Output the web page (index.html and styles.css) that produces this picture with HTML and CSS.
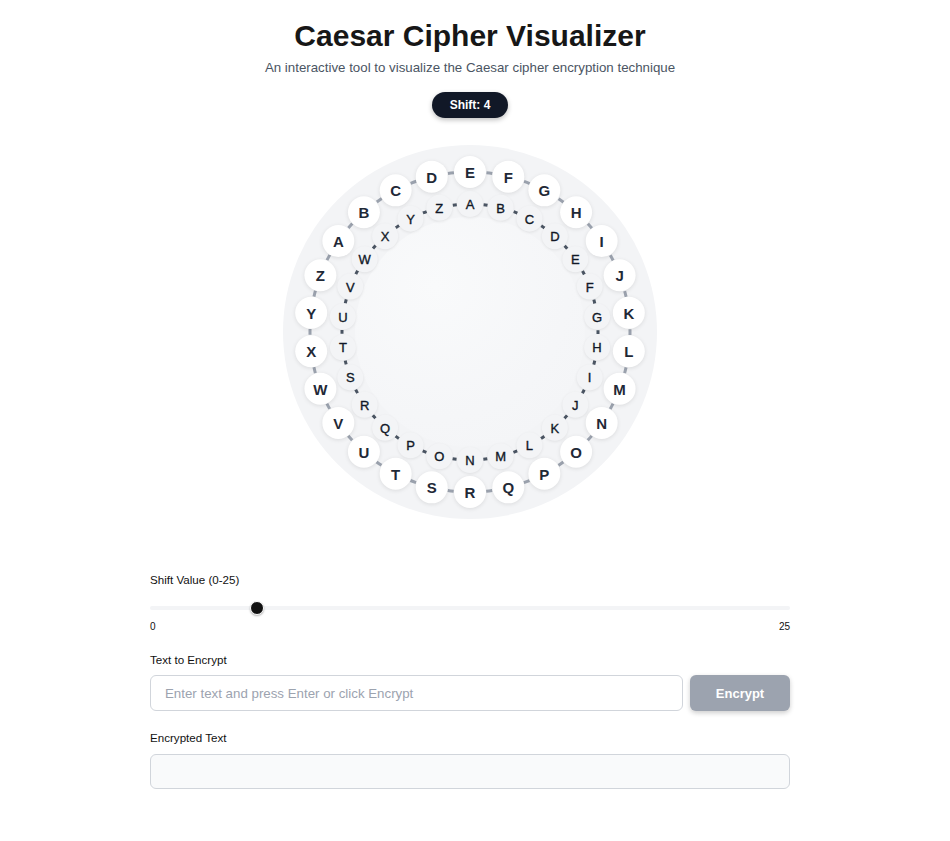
FILE: index.html
```html
<!DOCTYPE html>
<html lang="en">
<head>
<meta charset="utf-8">
<title>Caesar Cipher Visualizer</title>
<link rel="stylesheet" href="styles.css">
</head>
<body>
<div class="page">
  <main class="app">
    <header class="head">
      <h1 class="title">Caesar Cipher Visualizer</h1>
      <p class="subtitle">An interactive tool to visualize the Caesar cipher encryption technique</p>
      <div class="badge">Shift: 4</div>
    </header>

    <section class="wheel">
      <div class="core"></div>
      <svg class="rings" width="374" height="374" viewBox="0 0 374 374">
        <circle class="ring-outer" cx="187" cy="187" r="160"/>
        <circle class="ring-inner" cx="187" cy="187" r="128"/>
      </svg>
      <span class="l out" style="--i:-4">A</span>
      <span class="l out" style="--i:-3">B</span>
      <span class="l out" style="--i:-2">C</span>
      <span class="l out" style="--i:-1">D</span>
      <span class="l out" style="--i:0">E</span>
      <span class="l out" style="--i:1">F</span>
      <span class="l out" style="--i:2">G</span>
      <span class="l out" style="--i:3">H</span>
      <span class="l out" style="--i:4">I</span>
      <span class="l out" style="--i:5">J</span>
      <span class="l out" style="--i:6">K</span>
      <span class="l out" style="--i:7">L</span>
      <span class="l out" style="--i:8">M</span>
      <span class="l out" style="--i:9">N</span>
      <span class="l out" style="--i:10">O</span>
      <span class="l out" style="--i:11">P</span>
      <span class="l out" style="--i:12">Q</span>
      <span class="l out" style="--i:13">R</span>
      <span class="l out" style="--i:14">S</span>
      <span class="l out" style="--i:15">T</span>
      <span class="l out" style="--i:16">U</span>
      <span class="l out" style="--i:17">V</span>
      <span class="l out" style="--i:18">W</span>
      <span class="l out" style="--i:19">X</span>
      <span class="l out" style="--i:20">Y</span>
      <span class="l out" style="--i:21">Z</span>

      <span class="l in" style="--i:0">A</span>
      <span class="l in" style="--i:1">B</span>
      <span class="l in" style="--i:2">C</span>
      <span class="l in" style="--i:3">D</span>
      <span class="l in" style="--i:4">E</span>
      <span class="l in" style="--i:5">F</span>
      <span class="l in" style="--i:6">G</span>
      <span class="l in" style="--i:7">H</span>
      <span class="l in" style="--i:8">I</span>
      <span class="l in" style="--i:9">J</span>
      <span class="l in" style="--i:10">K</span>
      <span class="l in" style="--i:11">L</span>
      <span class="l in" style="--i:12">M</span>
      <span class="l in" style="--i:13">N</span>
      <span class="l in" style="--i:14">O</span>
      <span class="l in" style="--i:15">P</span>
      <span class="l in" style="--i:16">Q</span>
      <span class="l in" style="--i:17">R</span>
      <span class="l in" style="--i:18">S</span>
      <span class="l in" style="--i:19">T</span>
      <span class="l in" style="--i:20">U</span>
      <span class="l in" style="--i:21">V</span>
      <span class="l in" style="--i:22">W</span>
      <span class="l in" style="--i:23">X</span>
      <span class="l in" style="--i:24">Y</span>
      <span class="l in" style="--i:25">Z</span>
    </section>

    <section class="controls">
      <div class="field">
        <label class="label" for="shift">Shift Value (0-25)</label>
        <input class="range" id="shift" type="range" min="0" max="25" value="4">
        <div class="range-scale"><span>0</span><span>25</span></div>
      </div>

      <div class="field">
        <label class="label label-tight" for="plain">Text to Encrypt</label>
        <div class="input-row">
          <input class="text-input" id="plain" type="text" placeholder="Enter text and press Enter or click Encrypt">
          <button class="btn" type="button">Encrypt</button>
        </div>
      </div>

      <div class="field field-out">
        <div class="label">Encrypted Text</div>
        <div class="output"></div>
      </div>
    </section>
  </main>
</div>
</body>
</html>
```

FILE: styles.css
```css
* { box-sizing: border-box; }

html, body {
  margin: 0;
  padding: 0;
  background: #ffffff;
  font-family: "Liberation Sans", Arial, sans-serif;
  color: #111827;
}

.page {
  width: 940px;
}

.app {
  width: 640px;
  margin: 0 auto;
  padding-top: 18px;
  display: flex;
  flex-direction: column;
  align-items: center;
}

.head {
  display: flex;
  flex-direction: column;
  align-items: center;
}

.title {
  margin: 0;
  font-size: 30px;
  line-height: 36px;
  font-weight: 700;
  color: #171717;
}

.subtitle {
  margin: 4px 0 0;
  font-size: 13.3px;
  line-height: 20px;
  color: #4b5563;
}

.badge {
  margin-top: 14px;
  height: 26px;
  width: 76px;
  border-radius: 13px;
  background: #111827;
  color: #ffffff;
  font-size: 12px;
  font-weight: 700;
  line-height: 26px;
  text-align: center;
  box-shadow: 0 2px 5px rgba(0, 0, 0, 0.25);
}

.wheel {
  position: relative;
  margin-top: 27px;
  width: 374px;
  height: 374px;
  border-radius: 50%;
  background: #f3f4f6;
}

.core {
  position: absolute;
  left: 72px;
  top: 72px;
  width: 230px;
  height: 230px;
  border-radius: 50%;
  background: radial-gradient(circle at 35% 30%, #f9fafb 0%, #f5f6f8 60%, #f3f4f6 100%);
}

.rings {
  position: absolute;
  left: 0;
  top: 0;
}

.ring-outer {
  fill: none;
  stroke: #9ca3af;
  stroke-width: 3;
  stroke-dasharray: 6 32.66;
  stroke-dashoffset: 3;
}

.ring-inner {
  fill: none;
  stroke: #4b5563;
  stroke-width: 3;
  stroke-dasharray: 4 26.93;
  stroke-dashoffset: 2;
}

.l {
  position: absolute;
  left: 50%;
  top: 50%;
  display: flex;
  align-items: center;
  justify-content: center;
  border-radius: 50%;
  color: #1f2937;
}

.l.out {
  width: 32px;
  height: 32px;
  margin: -16px 0 0 -16px;
  background: #ffffff;
  font-size: 15px;
  font-weight: 700;
  box-shadow: 0 1px 4px rgba(0, 0, 0, 0.10);
  transform: rotate(calc(var(--i) * 13.846deg)) translateY(-160px) rotate(calc(var(--i) * -13.846deg));
}

.l.in {
  width: 26px;
  height: 26px;
  margin: -13px 0 0 -13px;
  background: #f3f4f6;
  font-size: 13px;
  font-weight: 400;
  color: #111827;
  -webkit-text-stroke: 0.35px #111827;
  box-shadow: 0 1px 3px rgba(0, 0, 0, 0.08);
  transform: rotate(calc(var(--i) * 13.846deg)) translateY(-128px) rotate(calc(var(--i) * -13.846deg));
}

.controls {
  width: 640px;
  margin-top: 53px;
  display: flex;
  flex-direction: column;
  gap: 18px;
}

.field {
  display: flex;
  flex-direction: column;
}

.field-out {
  margin-top: 1px;
}

.label {
  font-size: 11.6px;
  line-height: 16px;
  color: #111111;
  margin-bottom: 8px;
}

.label-tight {
  margin-bottom: 7px;
}

.range {
  -webkit-appearance: none;
  appearance: none;
  width: 100%;
  height: 14px;
  margin: 5px 0 0;
  background: transparent;
}

.range::-webkit-slider-runnable-track {
  height: 4px;
  background: #f3f4f6;
  border-radius: 2px;
}

.range::-webkit-slider-thumb {
  -webkit-appearance: none;
  width: 14px;
  height: 14px;
  margin-top: -5px;
  border-radius: 50%;
  background: #111111;
  border: 1px solid #ffffff;
  box-shadow: 0 1px 2px rgba(0, 0, 0, 0.3);
}

.range-scale {
  display: flex;
  justify-content: space-between;
  margin-top: 5px;
  font-size: 10px;
  line-height: 14px;
  color: #111111;
}

.input-row {
  display: flex;
  gap: 7px;
}

.text-input {
  flex: 1;
  height: 36px;
  padding: 0 14px;
  border: 1px solid #d1d5db;
  border-radius: 6px;
  font-family: "Liberation Sans", Arial, sans-serif;
  font-size: 13.3px;
  color: #111827;
  background: #ffffff;
  outline: none;
}

.text-input::placeholder {
  color: #9ca3af;
}

.btn {
  width: 100px;
  height: 36px;
  border: none;
  border-radius: 6px;
  background: #9ca3af;
  color: #ffffff;
  font-family: "Liberation Sans", Arial, sans-serif;
  font-size: 13px;
  font-weight: 700;
  box-shadow: 0 2px 5px rgba(0, 0, 0, 0.2);
}

.output {
  height: 35px;
  border: 1px solid #d1d5db;
  border-radius: 6px;
  background: #f9fafb;
}
```
